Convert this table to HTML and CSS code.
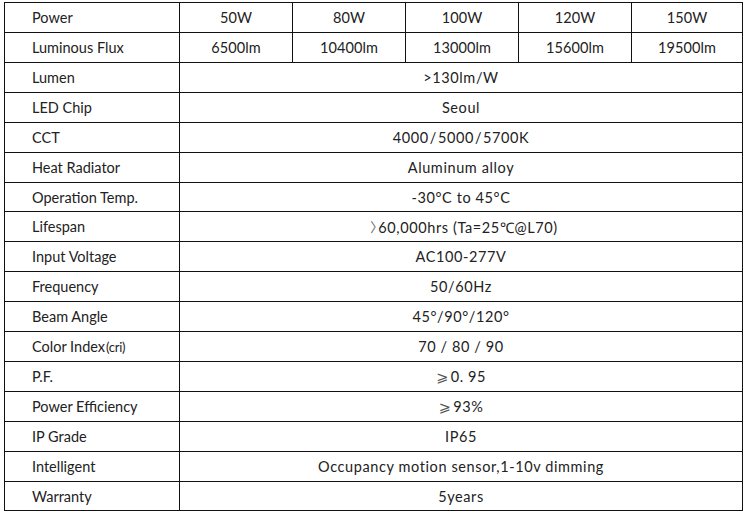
FILE: index.html
```html
<!DOCTYPE html>
<html>
<head>
<meta charset="utf-8">
<link rel="stylesheet" href="styles.css">
</head>
<body>
<div class="spec">
  <div class="cell label">Power</div>
  <div class="cell">50W</div><div class="cell">80W</div><div class="cell">100W</div><div class="cell">120W</div><div class="cell">150W</div>

  <div class="cell label">Luminous Flux</div>
  <div class="cell">6500lm</div><div class="cell">10400lm</div><div class="cell">13000lm</div><div class="cell">15600lm</div><div class="cell">19500lm</div>

  <div class="cell label">Lumen</div><div class="cell span">&gt;130lm/W</div>
  <div class="cell label">LED Chip</div><div class="cell span">Seoul</div>
  <div class="cell label">CCT</div><div class="cell span">4000<span class="fw">/</span>5000<span class="fw">/</span> 5700K</div>
  <div class="cell label">Heat Radiator</div><div class="cell span">Aluminum alloy</div>
  <div class="cell label short">Operation Temp.</div><div class="cell span short">-30°C to 45°C</div>
  <div class="cell label">Lifespan</div><div class="cell span"><span class="ang">〉</span>60,000hrs (Ta=25℃@L70)</div>
  <div class="cell label">Input Voltage</div><div class="cell span">AC100-277V</div>
  <div class="cell label">Frequency</div><div class="cell span">50/60Hz</div>
  <div class="cell label">Beam Angle</div><div class="cell span">45°/90°/120°</div>
  <div class="cell label">Color Index<span class="cri">(cri)</span></div><div class="cell span">70 / 80 / 90</div>
  <div class="cell label">P.F.</div><div class="cell span"><span class="ge">⩾</span>0. 95</div>
  <div class="cell label">Power Efficiency</div><div class="cell span"><span class="ge">⩾</span>93%</div>
  <div class="cell label">IP Grade</div><div class="cell span">IP65</div>
  <div class="cell label">Intelligent</div><div class="cell span">Occupancy motion sensor,1-10v dimming</div>
  <div class="cell label short">Warranty</div><div class="cell span short">5years</div>
</div>
</body>
</html>
```

FILE: styles.css
```css
html, body {
  margin: 0;
  padding: 0;
  background: #fff;
}

body {
  padding: 2px 0 0 4px;
}

.spec {
  display: grid;
  grid-template-columns: 174px 112px 112px 112px 112px 110px;
  grid-auto-rows: auto;
  gap: 1px;
  padding: 1px;
  width: max-content;
  background: #111;
  font-family: Lato, "Open Sans", sans-serif;
  font-size: 14.5px;
  color: #222;
}

.cell {
  background: #fff;
  height: 29px;
  display: flex;
  align-items: center;
  justify-content: center;
  white-space: nowrap;
  letter-spacing: 0.1px;
}

.cell.short {
  height: 28px;
}

.label {
  justify-content: flex-start;
  padding-left: 27px;
  letter-spacing: 0;
}

.span {
  grid-column: 2 / 7;
  letter-spacing: 0.6px;
}

.fw {
  margin: 0 1px;
}

.ang {
  font-family: "Noto Sans CJK SC", sans-serif;
  color: #666;
  font-size: 13px;
  letter-spacing: -5px;
  margin-left: 6px;
}

.ge {
  font-family: "DejaVu Sans", sans-serif;
  color: #555;
  margin-right: 2px;
}

.cri {
  font-size: 13px;
  letter-spacing: -0.3px;
  margin-left: 1px;
}
```
